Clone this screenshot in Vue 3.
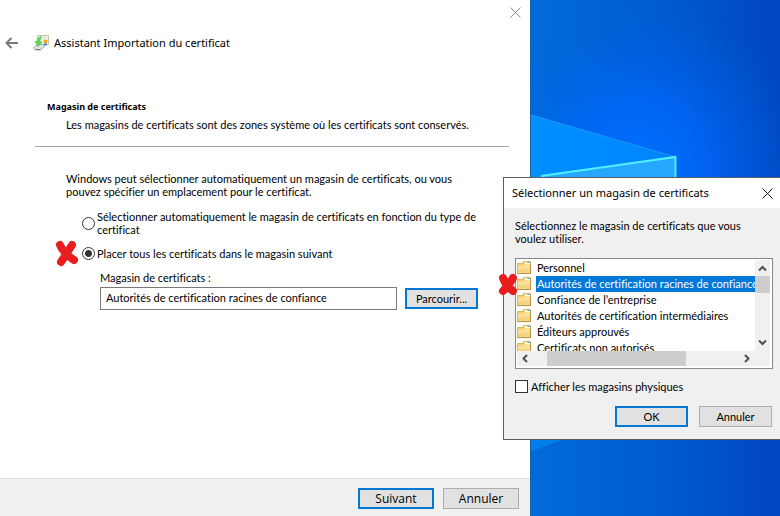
<script setup>
import { ref } from 'vue'

const mode = ref('manual')
const store = ref('Autorités de certification racines de confiance')
const showPhysical = ref(false)

const stores = [
  'Personnel',
  'Autorités de certification racines de confiance',
  'Confiance de l’entreprise',
  'Autorités de certification intermédiaires',
  'Éditeurs approuvés',
  'Certificats non autorisés'
]
const selected = ref(1)
</script>

<template>
  <div class="desktop">
    <main class="wizard">
      <div class="caption">
        <button class="close" aria-label="Fermer">
          <svg width="11" height="11" viewBox="0 0 11 11"><path d="M0.5 0.5l10 10M10.5 0.5l-10 10" /></svg>
        </button>
      </div>
      <header class="heading">
        <button class="back" aria-label="Retour">
          <svg width="13" height="12" viewBox="0 0 13 12"><path d="M13 6H2M6.5 1L1.5 6l5 5" /></svg>
        </button>
        <svg class="cert-icon" width="16" height="16" viewBox="0 0 16 16">
          <path d="M4.5 0.5h11v9h-11z" fill="#f4f1e8" stroke="#c9c2ae" />
          <path d="M9 3h4" stroke="#dcd8cc" />
          <path d="M0.5 12.5l4-3h6l1 2-4 3.5H2z" fill="#dfe0e2" stroke="#a9acae" />
          <path d="M3 14.5h4.5" stroke="#777" />
          <path d="M8.5 1.5C5.5 2 4 4 4 6.5H2l3 5 4-4.5H7C7 5 7.5 3 8.5 1.5z" fill="#5bdc55" stroke="#3fb83f" stroke-width="0.6" />
          <path d="M11.5 7.5l-0.5 3.5 1.5-1 1.5 1-0.5-3.5z" fill="#3f7fd8" />
          <circle cx="12.5" cy="6.5" r="2" fill="#f5a21c" />
        </svg>
        <h1>Assistant Importation du certificat</h1>
      </header>

      <section class="intro">
        <h2>Magasin de certificats</h2>
        <p>Les magasins de certificats sont des zones système où les certificats sont conservés.</p>
      </section>

      <section class="content">
        <p>Windows peut sélectionner automatiquement un magasin de certificats, ou vous<br>pouvez spécifier un emplacement pour le certificat.</p>

        <div class="options">
          <label class="option">
            <input v-model="mode" type="radio" name="mode" value="auto">
            <span>Sélectionner automatiquement le magasin de certificats en fonction du type de<br>certificat</span>
          </label>
          <label class="option">
            <input v-model="mode" type="radio" name="mode" value="manual">
            <span>Placer tous les certificats dans le magasin suivant</span>
            <svg class="cross" width="25" height="28" viewBox="0 0 25 28">
              <path d="M5 5Q9 14 19 20M17 5Q12 13 6 22" />
            </svg>
          </label>
        </div>

        <div class="store">
          <label for="store">Magasin de certificats :</label>
          <div class="store-row">
            <input id="store" v-model="store" type="text">
            <button class="btn default">Parcourir...</button>
          </div>
        </div>
      </section>

      <footer class="actions">
        <button class="btn default">Suivant</button>
        <button class="btn">Annuler</button>
      </footer>
    </main>

    <div class="wallpaper">
      <svg viewBox="0 0 250 516" preserveAspectRatio="none">
        <defs>
          <linearGradient id="base" x1="0" y1="0" x2="1" y2="0">
            <stop offset="0" stop-color="#006cd8" />
            <stop offset="0.5" stop-color="#005cd2" />
            <stop offset="1" stop-color="#0046c0" />
          </linearGradient>
          <radialGradient id="glow" gradientUnits="userSpaceOnUse" cx="110" cy="170" r="170">
            <stop offset="0" stop-color="#0070ff" />
            <stop offset="0.4" stop-color="#0068ff" stop-opacity="0.7" />
            <stop offset="1" stop-color="#0060e0" stop-opacity="0" />
          </radialGradient>
          <linearGradient id="beam" x1="0" y1="0" x2="1" y2="0">
            <stop offset="0" stop-color="#0090ff" />
            <stop offset="1" stop-color="#0084ff" />
          </linearGradient>
        </defs>
        <rect width="250" height="516" fill="url(#base)" />
        <rect width="250" height="516" fill="url(#glow)" />
        <path d="M0 115L145 157V300H0z" fill="url(#beam)" />
        <path d="M0 115L145 157" stroke="#189cff" stroke-width="1" fill="none" />
        <path d="M0 178L145 157V300H0z" fill="#26a6ff" />
        <path d="M10 176L145 157V300" stroke="#4ff0ff" stroke-width="2" fill="none" />
        <path d="M0 430H60L0 451z" fill="#0080ec" />
      </svg>
    </div>

    <div class="dialog" role="dialog" aria-labelledby="dialog-title">
      <header class="titlebar">
        <h2 id="dialog-title">Sélectionner un magasin de certificats</h2>
        <button class="close" aria-label="Fermer">
          <svg width="11" height="11" viewBox="0 0 11 11"><path d="M0.5 0.5l10 10M10.5 0.5l-10 10" /></svg>
        </button>
      </header>
      <div class="dialog-body">
        <p>Sélectionnez le magasin de certificats que vous<br>voulez utiliser.</p>

        <div class="tree">
          <ul class="rows" role="listbox">
            <li
              v-for="(name, i) in stores"
              :key="name"
              role="option"
              :aria-selected="i === selected"
              :class="{ selected: i === selected }"
              @click="selected = i"
            >
              <svg width="15" height="16" viewBox="0 0 15 16">
                <path d="M0.5 3.5h5l1-2h7v12h-13z" fill="#f3cf73" stroke="#d9b766" />
                <path d="M8 2h5v2H8z" fill="#fff" />
                <path d="M10.5 2.5h2" stroke="#3b8fe0" />
                <path d="M1 5.5h6l1-1.5h5v9H1z" fill="#fbe09a" />
                <path d="M1 9h12v4H1z" fill="#f6d580" />
                <path d="M0.5 13.5h13V3" fill="none" stroke="#b8954a" />
              </svg>
              <span>{{ name }}</span>
            </li>
          </ul>
          <div class="vscroll">
            <svg width="15" height="16" viewBox="0 0 15 16"><path d="M4 10.5L7.5 7l3.5 3.5" /></svg>
            <div class="thumb"></div>
            <svg width="15" height="16" viewBox="0 0 15 16"><path d="M4 5.5L7.5 9 11 5.5" /></svg>
          </div>
          <div class="hscroll">
            <svg width="16" height="15" viewBox="0 0 16 15"><path d="M10 4L6.5 7.5 10 11" /></svg>
            <div class="thumb"></div>
            <svg width="16" height="15" viewBox="0 0 16 15"><path d="M6 4l3.5 3.5L6 11" /></svg>
          </div>
          <svg class="cross" width="20" height="24" viewBox="0 0 20 24">
            <path d="M5 5Q8 13 15 18M15 5Q11 12 5 18" />
          </svg>
        </div>

        <label class="check">
          <input v-model="showPhysical" type="checkbox">
          <span>Afficher les magasins physiques</span>
        </label>

        <div class="dialog-actions">
          <button class="btn default">OK</button>
          <button class="btn">Annuler</button>
        </div>
      </div>
    </div>
  </div>
</template>

<style>
body {
  margin: 0;
}
</style>

<style scoped>
.desktop {
  position: relative;
  display: grid;
  grid-template-columns: 53fr 25fr;
  min-height: 100vh;
  overflow: hidden;
  font: 11px/13px Lato, sans-serif;
  font-variant-ligatures: none;
  color: #000;
}

h1,
h2,
p,
ul {
  margin: 0;
  padding: 0;
}

button,
input {
  font: inherit;
  color: inherit;
  margin: 0;
  box-sizing: border-box;
}

.wizard {
  display: flex;
  flex-direction: column;
  min-width: 0;
  background: #fff;
}

.caption {
  display: flex;
  justify-content: flex-end;
  padding: 7px 9px 0 0;
}

.close,
.back {
  display: flex;
  padding: 0;
  border: 0;
  background: none;
}

.close path {
  fill: none;
  stroke: #8c8c8c;
}

.back path {
  fill: none;
  stroke: #7a7a7a;
  stroke-width: 2;
}

.heading {
  display: flex;
  align-items: center;
  padding: 16px 5px 0;
}

.cert-icon {
  margin-left: 15px;
}

.heading h1 {
  margin-left: 5px;
  font: 11px/18px "Noto Sans", sans-serif;
}

.intro {
  margin: 0 21px 0 35px;
  padding: 48px 0 15px 12px;
  border-bottom: 1px solid #a0a0a0;
}

.intro h2 {
  font: bold 9px/13px "Noto Sans", sans-serif;
}

.intro p {
  padding: 5px 0 0 19px;
}

.content {
  flex: 1;
  padding: 25px 52px 0 66px;
}

.options {
  display: grid;
  gap: 11px;
  padding: 12px 0 0 16px;
}

.option {
  position: relative;
  display: flex;
  align-items: center;
  gap: 2px;
  white-space: nowrap;
}

.option input {
  flex: none;
  appearance: none;
  width: 13px;
  height: 13px;
  border: 1px solid #333;
  border-radius: 50%;
  background: #fff;
}

.option input:checked {
  background: radial-gradient(circle, #333 3px, #fff 4px);
}

.cross {
  position: absolute;
  overflow: visible;
}

.cross path {
  fill: none;
  stroke: #e81e1e;
  stroke-width: 8;
  stroke-linecap: round;
}

.option .cross {
  left: -27px;
  top: -7px;
}

.store {
  padding: 11px 0 0 34px;
}

.store-row {
  display: flex;
  align-items: center;
  gap: 8px;
  padding-top: 3px;
}

.store-row input {
  flex: 1;
  min-width: 0;
  height: 23px;
  padding: 0 5px 3px;
  border: 1px solid #7a7a7a;
  background: #fff;
}

.btn {
  width: 73px;
  height: 21px;
  padding: 0;
  border: 1px solid #adadad;
  background: #e1e1e1;
}

.btn.default {
  border: 2px solid #0078d7;
}

.actions {
  display: flex;
  justify-content: flex-end;
  gap: 9px;
  padding: 9px 11px 7px;
  border-top: 1px solid #dfdfdf;
  background: #f0f0f0;
}

.actions .btn {
  width: 76px;
  font: 12px/16px "Open Sans", sans-serif;
}

.wallpaper {
  position: relative;
  border-left: 1px solid #1560a8;
}

.wallpaper svg {
  position: absolute;
  width: 100%;
  height: 100%;
}

.dialog {
  position: absolute;
  top: 177px;
  right: 0;
  width: 277px;
  box-sizing: border-box;
  border: 1px solid #5a5f66;
  border-right: 0;
  background: #f0f0f0;
}

.titlebar {
  display: flex;
  align-items: center;
  justify-content: space-between;
  height: 30px;
  padding: 0 7px 0 8px;
  background: #fff;
}

.titlebar h2 {
  font: 11px/16px "Noto Sans", sans-serif;
}

.titlebar .close path {
  stroke: #111;
}

.dialog-body {
  padding: 11px 7px 12px 11px;
}

.tree {
  position: relative;
  display: grid;
  grid-template: 91px 15px / 1fr 15px;
  margin-top: 13px;
  padding: 1px 2px 2px 1px;
  border: 1px solid #828790;
  background: #fff;
}

.rows {
  overflow: hidden;
  list-style: none;
}

.rows li {
  display: flex;
  height: 16px;
  gap: 4px;
}

.rows svg {
  flex: none;
}

.rows span {
  flex: none;
  padding: 0 1px;
  line-height: 16px;
  white-space: nowrap;
}

.rows .selected span {
  background: #0078d7;
  color: #fff;
}

.vscroll {
  display: flex;
  flex-direction: column;
  background: #f0f0f0;
}

.vscroll .thumb {
  height: 17px;
  margin-bottom: auto;
  background: #cdcdcd;
}

.vscroll path,
.hscroll path {
  fill: none;
  stroke: #505050;
  stroke-width: 2;
}

.hscroll {
  display: flex;
  grid-column: 1 / 3;
  padding-right: 15px;
  background: #f0f0f0;
}

.hscroll .thumb {
  width: 139px;
  margin: 0 auto 0 14px;
  background: #cdcdcd;
}

.tree .cross {
  left: -18px;
  top: 14px;
}

.check {
  display: flex;
  align-items: center;
  gap: 3px;
  margin-top: 11px;
}

.check input {
  appearance: none;
  width: 13px;
  height: 13px;
  border: 1px solid #333;
  background: #fff;
}

.check input:checked {
  background: #333;
}

.dialog-actions {
  display: flex;
  justify-content: flex-end;
  gap: 11px;
  margin-top: 13px;
  padding-right: 1px;
}
</style>
